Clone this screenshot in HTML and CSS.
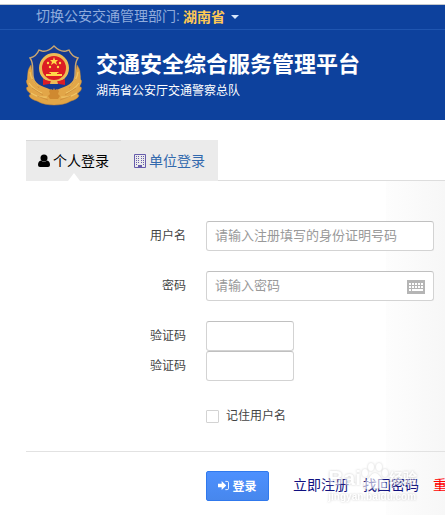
FILE: index.html
```html
<!DOCTYPE html>
<html lang="zh-CN">
<head>
  <meta charset="UTF-8">
  <meta name="viewport" content="width=device-width, initial-scale=1.0">
  <title>交通安全综合服务管理平台</title>
  <link rel="stylesheet" href="styles.css">
</head>

<body>
  <!-- Header -->
  <header class="header">
    <div class="top-bar">
      <span>切换公安交通管理部门:</span>
      <a href="#" class="province">湖南省 <span class="caret"></span></a>
    </div>
    <div class="brand">
      <svg class="emblem" viewBox="0 0 60 62" aria-hidden="true">
        <path d="M7 20C3 25 3 31 6 35C2 33 1 37 5 42C1 41 2 46 7 49C3 50 6 54 13 56C18 59 24 60 30 60C36 60 42 59 47 56C54 54 57 50 53 49C58 46 59 41 55 42C59 37 58 33 54 35C57 31 57 25 53 20L49 40L30 48L11 40Z" fill="#e2a545" stroke="#c58534" stroke-width=".5"/>
        <path d="M30 1C34 5 38 7 42 6L45 5C47 10 50 12 54 13C49 20 53 27 50 35C47 44 38 46 30 51C22 46 13 44 10 35C7 27 11 20 6 13C10 12 13 10 15 5L18 6C22 7 26 5 30 1Z" fill="#153b91" stroke="#c9a672" stroke-width="1.4"/>
        <path d="M6 23C7 33 12 39 20 42C25 44 28 45 30 47C32 45 35 44 40 42C48 39 53 33 54 23C58 30 57 38 55 44C52 51 42 58 30 59C18 58 8 51 5 44C3 38 2 30 6 23Z" fill="#e2a648"/>
        <g fill="none" stroke="#f0c566" stroke-width="1.2">
          <path d="M6 27Q7 35 14 41M5 38Q10 45 18 48M7 48Q14 53 23 52M54 27Q53 35 46 41M55 38Q50 45 42 48M53 48Q46 53 37 52"/>
        </g>
        <g fill="none" stroke="#c9893a" stroke-width=".7">
          <path d="M8 34L15 43M8 43L19 50M13 51L24 55M52 34L45 43M52 43L41 50M47 51L36 55"/>
        </g>
        <circle cx="30" cy="23" r="13.5" fill="#dc1d24" stroke="#edbb55" stroke-width="3"/>
        <path d="M30 12L31 15L34 15L32 17L33 20L30 18L27 20L28 17L26 15L29 15Z" fill="#ffd849"/>
        <g fill="#ffd849">
          <circle cx="24" cy="18" r="1.2"/>
          <circle cx="36" cy="18" r="1.2"/>
          <circle cx="26" cy="22" r="1.2"/>
          <circle cx="34" cy="22" r="1.2"/>
          <path d="M26 27h8l1 1h-2v1h5v2H22v-2h5v-1h-2z"/>
        </g>
        <path d="M19 34L25 36H35L41 34V40L35 39L30 37L25 39L19 40Z" fill="#dc1d24"/>
        <path d="M27 35h6l1 4h-8z" fill="#edbb55"/>
        <path d="M25 46l2-2 2 1 1-2 1 2 2-1 2 2-1 3 2 2-2 3H26l-2-3 2-2z" fill="#cf8930"/>
      </svg>
      <div>
        <h1>交通安全综合服务管理平台</h1>
        <p>湖南省公安厅交通警察总队</p>
      </div>
    </div>
  </header>

  <!-- Login tabs -->
  <nav class="tabs">
    <a href="#" class="tab active">
      <svg class="tab-icon" viewBox="0 0 12 14" aria-hidden="true">
        <circle cx="6" cy="4" r="3.5"/>
        <path d="M3 6.5Q6 9 9 6.5Q12 7 12 11Q12 13 10 13H2Q0 13 0 11Q0 7 3 6.5Z"/>
      </svg>
      <span>个人登录</span>
    </a>
    <a href="#" class="tab">
      <svg class="tab-icon" viewBox="0 0 12 14" aria-hidden="true">
        <path d="M.5.5h11v13H.5z" fill="none" stroke="currentColor"/>
        <path d="M2 2h1v1H2zM4 2h1v1H4zM7 2h1v1H7zM9 2h1v1H9zM2 4h1v1H2zM4 4h1v1H4zM7 4h1v1H7zM9 4h1v1H9zM2 6h1v1H2zM4 6h1v1H4zM7 6h1v1H7zM9 6h1v1H9zM2 8h1v1H2zM4 8h1v1H4zM7 8h1v1H7zM9 8h1v1H9zM2 10h1v1H2zM9 10h1v1H9zM4 11h4v3H4z"/>
      </svg>
      <span>单位登录</span>
    </a>
  </nav>

  <!-- Login form -->
  <form class="login-form">
    <div class="fields">
      <div class="row">
        <label for="username">用户名</label>
        <input type="text" id="username" class="text-input" placeholder="请输入注册填写的身份证明号码">
      </div>
      <div class="row">
        <label for="password">密码</label>
        <div class="password-box">
          <input type="password" id="password" class="text-input" placeholder="请输入密码">
          <button type="button" class="keyboard-button" aria-label="软键盘">
            <svg viewBox="0 0 18 14" aria-hidden="true">
              <path d="M0 0h18v14H0z" fill="#b5b5b5"/>
              <path d="M2 4h14M2 7h14" stroke="#fff" stroke-width="2" stroke-dasharray="2 1"/>
              <path d="M2 10h2M5 10h11" stroke="#fff" stroke-width="2"/>
            </svg>
          </button>
        </div>
      </div>
      <div class="row compact">
        <label for="captcha">验证码</label>
        <input type="text" id="captcha" class="text-input short">
      </div>
      <div class="row">
        <label for="sms-code">验证码</label>
        <input type="text" id="sms-code" class="text-input short">
      </div>
      <div class="row">
        <label class="remember" for="remember">
          <input type="checkbox" id="remember">
          <span>记住用户名</span>
        </label>
      </div>
    </div>

    <div class="actions">
      <button type="submit" class="login-button">
        <svg viewBox="0 0 12 12" aria-hidden="true">
          <path d="M0 4h4V1l5 5-5 5V8H0z" fill="currentColor"/>
          <path d="M8 1.5h2q1.5 0 1.5 1.5v6q0 1.5-1.5 1.5H8" fill="none" stroke="currentColor"/>
        </svg>
        <span>登录</span>
      </button>
      <a href="#">立即注册</a>
      <a href="#">找回密码</a>
      <a href="#" class="reset">重</a>
      <div class="watermark" aria-hidden="true">
        <div class="watermark-logo">
          <span>Bai</span>
          <svg viewBox="0 0 28 28">
            <ellipse cx="4" cy="11" rx="3" ry="4"/>
            <ellipse cx="10" cy="5" rx="3" ry="4"/>
            <ellipse cx="18" cy="5" rx="3" ry="4"/>
            <ellipse cx="24" cy="11" rx="3" ry="4"/>
            <path d="M14 11Q17 11 20 16L25 21Q27 28 20 27Q14 25 8 27Q1 28 3 21L8 16Q11 11 14 11Z"/>
          </svg>
          <span class="watermark-cn">经验</span>
        </div>
        <div class="watermark-url">jingyan.baidu.com</div>
      </div>
    </div>
  </form>
</body>
</html>
```

FILE: styles.css
```css
* {
  box-sizing: border-box;
}

body {
  margin: 0;
  padding-top: 4px;
  background: #fff;
  color: #444;
  font-family: "Liberation Sans", "Noto Sans CJK SC", sans-serif;
  font-size: 12px;
  line-height: 20px;
  overflow-x: hidden;
}

a {
  text-decoration: none;
}

/* Header */
.header {
  background: #0d419d;
  border-top: 1px solid #c4c8cc;
}

.top-bar {
  display: flex;
  gap: 3px;
  height: 25px;
  padding: 1px 36px;
  border-bottom: 1px solid #1f55b0;
  color: #90acdc;
  font-size: 14px;
}

.province {
  display: flex;
  align-items: center;
  gap: 6px;
  color: #ffc954;
  font-weight: bold;
}

.caret {
  border: 4px solid transparent;
  border-top-color: #d6e5fa;
  border-bottom: 0;
}

.brand {
  display: flex;
  gap: 12px;
  padding: 15px 24px 13px;
  color: #fff;
}

.emblem {
  width: 60px;
  height: 62px;
}

h1 {
  margin: 4px 0 0;
  font-size: 22px;
  line-height: 32px;
  white-space: nowrap;
}

.brand p {
  margin: 0;
}

/* Tabs */
.tabs {
  display: flex;
  margin: 20px 0 0 26px;
}

.tabs::after {
  content: "";
  flex: 1;
  border-bottom: 1px solid #ddd;
}

.tab {
  position: relative;
  display: flex;
  align-items: center;
  gap: 3px;
  height: 41px;
  padding: 0 13px;
  background: #ebebeb;
  color: #3269ad;
  font-size: 14px;
}

.tab.active {
  padding: 0 12px;
  border-top: 1px solid #d9d9d9;
  color: #000;
}

/* White notch under the selected tab */
.tab.active::after {
  content: "";
  position: absolute;
  bottom: 0;
  left: calc(50% - 6px);
  border: 6px solid transparent;
  border-top: 0;
  border-bottom: 8px solid #fff;
}

.tab-icon {
  width: 12px;
  height: 14px;
  fill: currentColor;
}

.tab:not(.active) .tab-icon {
  color: #665cac;
}

/* Form */
.login-form {
  min-height: 334px;
  background: linear-gradient(90deg, #fdfdfd, #f7f7f7) right / 59px 100% no-repeat;
}

.fields {
  padding: 40px 0 20px;
  border-bottom: 1px solid #e2e2e2;
  margin-left: 26px;
}

.row {
  display: flex;
  align-items: center;
  gap: 20px;
  margin-bottom: 20px;
}

.row > label:first-child {
  width: 160px;
  text-align: right;
}

.row:last-child {
  margin-bottom: 0;
}

.row.compact {
  margin-bottom: 0;
}

.text-input {
  width: 228px;
  height: 30px;
  padding: 0 8px 2px;
  border: 1px solid #d3d3d3;
  border-top-color: #c0c0c0;
  border-radius: 3px;
  background: #fff;
  font-family: inherit;
  font-size: 13px;
}

.text-input::placeholder {
  color: #999;
}

.text-input.short {
  width: 88px;
}

.password-box {
  position: relative;
}

.keyboard-button {
  position: absolute;
  top: 9px;
  right: 9px;
  width: 18px;
  height: 14px;
  padding: 0;
  border: 0;
  background: none;
}

.keyboard-button svg {
  display: block;
}

.row > label.remember {
  display: flex;
  align-items: center;
  gap: 7px;
  width: auto;
  height: 30px;
  margin-left: 180px;
}

.remember input {
  appearance: none;
  width: 13px;
  height: 13px;
  margin: 0;
  border: 1px solid #d3d3d3;
  border-radius: 1px;
  background: #fff;
}

/* Buttons and links */
.actions {
  position: relative;
  display: flex;
  align-items: flex-start;
  gap: 14px;
  min-height: 63px;
  padding: 19px 0 0 206px;
  overflow: hidden;
}

.actions a {
  flex: none;
  color: #101080;
  font-size: 14px;
  line-height: 28px;
}

.login-button {
  display: flex;
  flex: none;
  justify-content: center;
  align-items: center;
  gap: 3px;
  width: 63px;
  height: 30px;
  margin-right: 10px;
  padding: 0 0 2px;
  border: 1px solid #3079ed;
  border-radius: 2px;
  background: linear-gradient(#4d90fe, #4787ed);
  color: #fff;
  font-family: inherit;
  font-size: 12px;
  font-weight: bold;
}

.login-button svg {
  width: 11px;
  height: 11px;
}

.actions .reset {
  color: #f00;
}

/* Watermark over the links */
.watermark {
  position: absolute;
  top: 9px;
  right: 28px;
  color: #fff;
  opacity: 0.6;
  filter: drop-shadow(0 0 1px #aaa);
  font-weight: bold;
  pointer-events: none;
}

.watermark-logo {
  display: flex;
  align-items: flex-end;
  height: 29px;
  font-size: 21px;
  line-height: 24px;
}

.watermark-logo svg {
  width: 28px;
  height: 28px;
  fill: #fff;
}

.watermark-cn {
  font-size: 14px;
}

.watermark-url {
  font-size: 10px;
  line-height: 14px;
}
```
